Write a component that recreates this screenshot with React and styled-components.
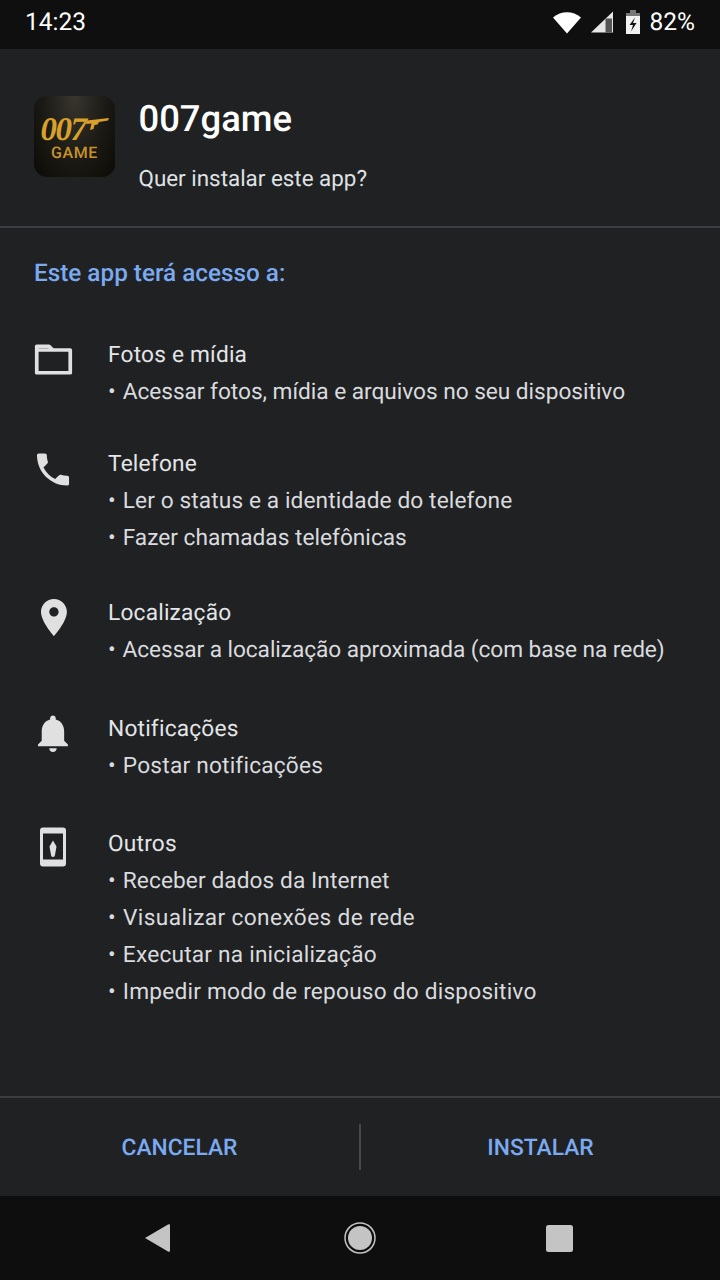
import React from "react";
import styled, { createGlobalStyle } from "styled-components";

const GlobalStyle = createGlobalStyle`
  html, body {
    margin: 0;
    padding: 0;
    background: #202123;
  }
  * {
    box-sizing: border-box;
  }
`;

const Screen = styled.div`
  width: 720px;
  height: 1280px;
  display: flex;
  flex-direction: column;
  overflow: hidden;
  background: #202123;
  font-family: Roboto, "Noto Sans", sans-serif;
  text-rendering: geometricPrecision;
  color: #e8eaed;
`;

const StatusBar = styled.div`
  height: 49px;
  flex: none;
  display: flex;
  align-items: center;
  justify-content: space-between;
  padding: 0 25px 6px 25px;
  background: #0f0f0f;
  color: #ffffff;
  font-size: 24.5px;
`;

const StatusIcons = styled.div`
  display: flex;
  align-items: center;
`;

const StatusGlyph = styled.svg`
  display: block;
  flex: none;
  margin-right: ${(props) => props.$gap}px;
`;

const Header = styled.div`
  height: 179px;
  flex: none;
  display: flex;
  align-items: flex-start;
  padding: 47px 34px 0;
  border-bottom: 2px solid #3c3d40;
`;

const AppIcon = styled.div`
  width: 81px;
  height: 81px;
  flex: none;
  border-radius: 13px;
  display: flex;
  flex-direction: column;
  align-items: center;
  padding-top: 20px;
  background: radial-gradient(ellipse at 50% 0%, #38362f 0%, #1c1a14 55%, #0c0a05 100%);
`;

const LogoRow = styled.div`
  display: flex;
  align-items: flex-start;
  height: 30px;
`;

const Logo007 = styled.span`
  font-family: "Liberation Serif", serif;
  font-style: italic;
  font-weight: 700;
  font-size: 33px;
  line-height: 29px;
  letter-spacing: -1.5px;
  color: #d9a02c;
`;

const LogoGame = styled.div`
  font-family: Roboto, sans-serif;
  font-weight: 500;
  font-size: 16px;
  line-height: 14px;
  letter-spacing: 0.6px;
  color: #c8922a;
`;

const HeaderText = styled.div`
  margin-left: 23.5px;
  display: flex;
  flex-direction: column;
`;

const AppName = styled.div`
  font-size: 36.4px;
  font-weight: 500;
  line-height: 44px;
  margin-top: 1px;
  color: #ffffff;
`;

const Prompt = styled.div`
  font-size: 22.4px;
  line-height: 30px;
  margin-top: 23px;
  color: #dfe1e4;
`;

const Content = styled.div`
  flex: 1;
  padding: 0 34px;
`;

const SectionTitle = styled.div`
  font-size: 24.3px;
  font-weight: 500;
  line-height: 30px;
  margin-top: 30px;
  margin-bottom: 47.5px;
  color: #7baaf0;
`;

const Group = styled.div`
  display: flex;
  margin-bottom: ${(props) => props.$after}px;
`;

const IconSlot = styled.div`
  width: 79px;
  flex: none;
  margin-left: -5px;
  color: #e0e0e0;
`;

const GroupIcon = styled.svg`
  display: block;
`;

const Lines = styled.div`
  display: flex;
  flex-direction: column;
`;

const GroupName = styled.div`
  font-size: 22.7px;
  line-height: 37px;
  letter-spacing: 0.2px;
  color: #e3e5e8;
`;

const Item = styled.div`
  font-size: 22.7px;
  line-height: 37px;
  letter-spacing: ${(props) => props.$track}px;
  color: #d9dbde;
  white-space: nowrap;
`;

const Bullet = styled.span`
  margin-right: 7px;
`;

const Footer = styled.div`
  height: 100px;
  flex: none;
  display: flex;
  align-items: center;
  border-top: 2px solid #3c3d40;
`;

const FooterButton = styled.div`
  flex: 1;
  text-align: center;
  font-size: 22.8px;
  font-weight: 500;
  color: #7baaf0;
`;

const Separator = styled.div`
  width: 2px;
  height: 46px;
  flex: none;
  background: #47484b;
`;

const NavBar = styled.div`
  height: 84px;
  flex: none;
  display: flex;
  align-items: center;
  justify-content: center;
  padding-right: 2px;
  background: #0e0e0e;
`;

const NavIcon = styled.svg`
  display: block;
  flex: none;
`;

const HomeIcon = styled(NavIcon)`
  margin: 0 170px 0 174px;
`;

const groups = [
  {
    name: "Fotos e mídia",
    after: 35,
    icon: (
      <path
        d="M7.750 14h33.500v22.750H7.750V10.250h12.250l3.750 3.750"
        fill="none"
        stroke="currentColor"
        strokeWidth="3.700"
        strokeLinejoin="round"
      />
    ),
    items: [{ text: "Acessar fotos, mídia e arquivos no seu dispositivo", track: -0.04 }],
  },
  {
    name: "Telefone",
    after: 38,
    icon: (
      <g transform="translate(2.67 3.17) scale(1.78)">
        <path
          d="M6.620 10.790c1.440 2.830 3.760 5.140 6.590 6.590l2.200-2.200c.270-.270.670-.360 1.020-.240 1.120.370 2.330.570 3.570.570.550 0 1 .450 1 1V20c0 .550-.450 1-1 1-9.390 0-17-7.610-17-17 0-.550.450-1 1-1h3.500c.550 0 1 .450 1 1 0 1.250.200 2.450.570 3.570.110.350.030.740-.250 1.020l-2.200 2.200z"
          fill="currentColor"
        />
      </g>
    ),
    items: [
      { text: "Ler o status e a identidade do telefone", track: 0.1 },
      { text: "Fazer chamadas telefônicas", track: 0 },
    ],
  },
  {
    name: "Localização",
    after: 42,
    icon: (
      <g transform="translate(2.75 1.3) scale(1.85)">
        <path
          d="M12 2C8.130 2 5 5.130 5 9c0 5.250 7 13 7 13s7-7.750 7-13c0-3.870-3.130-7-7-7zm0 9.500c-1.380 0-2.500-1.120-2.500-2.500s1.120-2.500 2.500-2.500 2.500 1.120 2.500 2.500-1.120 2.500-2.500 2.500z"
          fill="currentColor"
        />
      </g>
    ),
    items: [{ text: "Acessar a localização aproximada (com base na rede)", track: -0.08 }],
  },
  {
    name: "Notificações",
    after: 41,
    icon: (
      <g transform="translate(1.5 0.8) scale(1.87)">
        <path
          d="M12 22c1.100 0 2-.900 2-2h-4c0 1.100.890 2 2 2zm6-6v-5c0-3.070-1.640-5.640-4.500-6.320V4c0-.830-.670-1.500-1.500-1.500s-1.500.670-1.500 1.500v.680C7.630 5.360 6 7.920 6 11v5l-2 2v1h16v-1l-2-2z"
          fill="currentColor"
        />
      </g>
    ),
    items: [{ text: "Postar notificações", track: 0.2 }],
  },
  {
    name: "Outros",
    after: 0,
    icon: (
      <>
        <path
          fillRule="evenodd"
          d="M14 2.500h20a3 3 0 0 1 3 3v33a3 3 0 0 1-3 3H14a3 3 0 0 1-3-3v-33a3 3 0 0 1 3-3zm0 6v26h20v-26z"
          fill="currentColor"
        />
        <path d="M24 15.500l3.500 6-1.500 8.500a2 2 0 0 1-4 0l-1.500-8.500z" fill="currentColor" />
      </>
    ),
    items: [
      { text: "Receber dados da Internet", track: 0.08 },
      { text: "Visualizar conexões de rede", track: 0.37 },
      { text: "Executar na inicialização", track: 0.2 },
      { text: "Impedir modo de repouso do dispositivo", track: 0.2 },
    ],
  },
];

const App = () => {
  return (
    <>
      <GlobalStyle />
      <Screen>
        <StatusBar>
          <span>14:23</span>
          <StatusIcons>
            <StatusGlyph $gap={8.5} width="28" height="24" viewBox="0 0 28 24">
              <path d="M0 7.500C8 .5 20 .5 28 7.500L14 23.500z" fill="#fff" />
            </StatusGlyph>
            <StatusGlyph $gap={12} width="23" height="24" viewBox="0 0 23 24">
              <path d="M1 22.500L23 1.500v21z" fill="#e6e6e6" />
              <path d="M15.500 8.500H22v14h-6.500z" fill="#555" />
            </StatusGlyph>
            <StatusGlyph $gap={9} width="16" height="24" viewBox="0 0 16 24">
              <path d="M5 0h6v3h4v21H1V3h4z" fill="#777" />
              <path d="M1 6h14v18H1z" fill="#f2f2f2" />
              <path d="M10 7.500L4.500 15H8l-2 6.500 5.500-8.500H8z" fill="#111" />
            </StatusGlyph>
            <span>82%</span>
          </StatusIcons>
        </StatusBar>

        <Header>
          <AppIcon>
            <LogoRow>
              <Logo007>007</Logo007>
              <svg width="23" height="14" viewBox="0 0 23 14">
                <path d="M1 4.500L23 2l-1 2.500-9 1.500-1.500 2.500-3 .5-1 4-3.500 1 1.500-6.500-5.500.5z" fill="#d9a02c" />
              </svg>
            </LogoRow>
            <LogoGame>GAME</LogoGame>
          </AppIcon>
          <HeaderText>
            <AppName>007game</AppName>
            <Prompt>Quer instalar este app?</Prompt>
          </HeaderText>
        </Header>

        <Content>
          <SectionTitle>Este app terá acesso a:</SectionTitle>
          {groups.map((group) => (
            <Group key={group.name} $after={group.after}>
              <IconSlot>
                <GroupIcon width="48" height="48" viewBox="0 0 48 48">
                  {group.icon}
                </GroupIcon>
              </IconSlot>
              <Lines>
                <GroupName>{group.name}</GroupName>
                {group.items.map((item) => (
                  <Item key={item.text} $track={item.track}>
                    <Bullet>•</Bullet>
                    {item.text}
                  </Item>
                ))}
              </Lines>
            </Group>
          ))}
        </Content>

        <Footer>
          <FooterButton>CANCELAR</FooterButton>
          <Separator />
          <FooterButton>INSTALAR</FooterButton>
        </Footer>

        <NavBar>
          <NavIcon width="25" height="28" viewBox="0 0 25 28">
            <path d="M23 .500a1.200 1.200 0 0 1 2 1v25a1.200 1.200 0 0 1-2 1L0 14z" fill="#c4c4c4" />
          </NavIcon>
          <HomeIcon width="32" height="32" viewBox="0 0 32 32">
            <circle cx="16" cy="16" r="15" fill="none" stroke="#c4c4c4" strokeWidth="1.500" />
            <circle cx="16" cy="16" r="12" fill="#c4c4c4" />
          </HomeIcon>
          <NavIcon width="27" height="27" viewBox="0 0 27 27">
            <rect width="27" height="27" rx="2.500" fill="#c4c4c4" />
          </NavIcon>
        </NavBar>
      </Screen>
    </>
  );
};

export default App;
